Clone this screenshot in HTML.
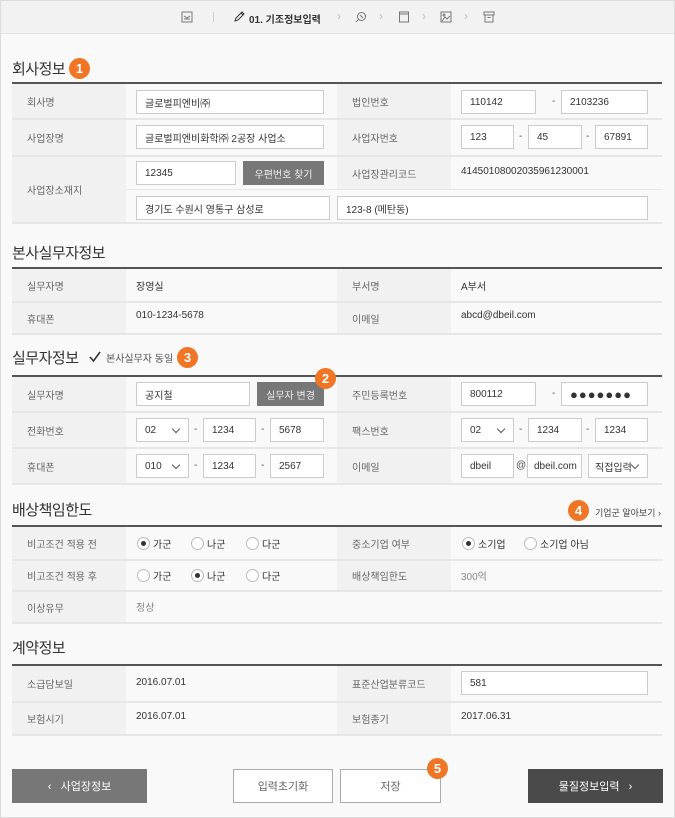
<!DOCTYPE html>
<html><head><meta charset="utf-8"><style>
*{box-sizing:border-box;margin:0;padding:0}
body{width:675px;height:818px;background:#f9f9f9;font-family:"Liberation Sans","Noto Sans CJK KR",sans-serif;font-size:10px;color:#333;position:relative;overflow:hidden}
.frame{position:absolute;left:0;top:0;width:675px;height:818px;border:1px solid #dcdcdc}
.hdr{position:absolute;left:1px;top:1px;width:673px;height:33px;background:#f2f2f2;border-bottom:1px solid #e2e2e2}
.a{position:absolute}
.t{position:absolute;left:12px;font-size:15px;color:#333;letter-spacing:-0.5px}
.ln{position:absolute;left:12px;width:650px;height:2px;background:#555}
.sep{position:absolute;left:12px;width:650px;height:2px;background:#e6e6e6}
.lb{position:absolute;background:#f1f1f1;color:#666;display:flex;align-items:center;padding-left:15px;font-size:10px}
.in{position:absolute;height:24px;border:1px solid #ccc;background:#fff;padding-left:8px;display:flex;align-items:center;font-size:10px;color:#333}
.tx{position:absolute;font-size:10px;color:#333}
.btn{position:absolute;height:24px;background:#777;color:#eee;display:flex;align-items:center;justify-content:center;font-size:10px}
.dash{position:absolute;font-size:10px;color:#555}
.badge{position:absolute;width:21px;height:21px;border-radius:50%;background:#f07524;color:#fff;font-weight:bold;font-size:13px;display:flex;align-items:center;justify-content:center}
.sel::after{content:"";position:absolute;right:9px;top:7px;width:5px;height:5px;border-right:1px solid #555;border-bottom:1px solid #555;transform:rotate(45deg)}
.rd{position:absolute;width:13px;height:13px;border:1px solid #bbb;border-radius:50%;background:#fff}
.rd.on::after{content:"";position:absolute;left:3px;top:3px;width:5px;height:5px;border-radius:50%;background:#333}
.rl{position:absolute;font-size:10px;color:#333}
.bt{position:absolute;top:769px;height:34px;display:flex;align-items:center;justify-content:center;font-size:11px}
</style></head><body>
<div class="frame"></div>
<div class="hdr">
<svg class="a" style="left:180px;top:10px" width="12" height="12" viewBox="0 0 12 12" fill="none" stroke="#777"><rect x="1" y="1" width="10" height="10"/><path d="M3 5l3 2 3-2M3 8h6"/></svg>
<div class="a" style="left:212px;top:11px;width:1px;height:10px;background:#ccc"></div>
<svg class="a" style="left:232px;top:10px" width="12" height="12" viewBox="0 0 12 12" fill="none" stroke="#333"><path d="M2 10l1-3 6-6 2 2-6 6zM8 2l2 2"/></svg>
<div class="a" style="left:248px;top:10px;font-size:10px;font-weight:bold;color:#333">01. 기조정보입력</div>
<div class="a" style="left:336px;top:8px;color:#bbb;font-size:12px">›</div>
<svg class="a" style="left:354px;top:10px" width="12" height="12" viewBox="0 0 12 12" fill="none" stroke="#777"><circle cx="6.5" cy="5.5" r="4"/><path d="M1 11l3-3M5 4l3 3"/></svg>
<div class="a" style="left:378px;top:8px;color:#bbb;font-size:12px">›</div>
<svg class="a" style="left:397px;top:10px" width="12" height="12" viewBox="0 0 12 12" fill="none" stroke="#777"><rect x="1.5" y="1" width="9" height="10"/><path d="M1.5 3h9"/></svg>
<div class="a" style="left:421px;top:8px;color:#bbb;font-size:12px">›</div>
<svg class="a" style="left:439px;top:10px" width="12" height="12" viewBox="0 0 12 12" fill="none" stroke="#777"><rect x="1" y="1" width="10" height="10"/><path d="M2 10l3-4 2 2 3-3"/><circle cx="4" cy="4" r="1"/></svg>
<div class="a" style="left:463px;top:8px;color:#bbb;font-size:12px">›</div>
<svg class="a" style="left:482px;top:10px" width="12" height="12" viewBox="0 0 12 12" fill="none" stroke="#777"><rect x="1" y="1" width="10" height="3"/><path d="M2 4v7h8V4M4.5 6.5h3"/></svg>
</div>

<div class="t" style="top:58px">회사정보</div>
<div class="badge" style="left:69px;top:58px">1</div>
<div class="ln" style="top:82px"></div>
<div class="lb" style="left:12px;top:84px;width:114px;height:34px">회사명</div>
<div class="lb" style="left:337px;top:84px;width:114px;height:34px">법인번호</div>
<div class="in" style="left:136px;top:90px;width:188px">글로벌피엔비㈜</div>
<div class="in" style="left:461px;top:90px;width:75px">110142</div>
<div class="dash" style="left:552px;top:96px">-</div>
<div class="in" style="left:561px;top:90px;width:87px">2103236</div>
<div class="sep" style="top:118px"></div>
<div class="lb" style="left:12px;top:120px;width:114px;height:35px">사업장명</div>
<div class="lb" style="left:337px;top:120px;width:114px;height:35px">사업자번호</div>
<div class="in" style="left:136px;top:125px;width:188px">글로벌피엔비화학㈜ 2공장 사업소</div>
<div class="in" style="left:461px;top:125px;width:53px">123</div>
<div class="dash" style="left:519px;top:131px">-</div>
<div class="in" style="left:528px;top:125px;width:54px">45</div>
<div class="dash" style="left:586px;top:131px">-</div>
<div class="in" style="left:595px;top:125px;width:53px">67891</div>
<div class="sep" style="top:155px"></div>
<div class="lb" style="left:12px;top:157px;width:114px;height:65px">사업장소재지</div>
<div class="in" style="left:136px;top:161px;width:100px">12345</div>
<div class="btn" style="left:243px;top:161px;width:81px">우편번호 찾기</div>
<div class="lb" style="left:337px;top:157px;width:114px;height:32px">사업장관리코드</div>
<div class="tx" style="left:461px;top:166px">41450108002035961230001</div>
<div class="a" style="left:126px;top:189px;width:536px;height:1px;background:#e6e6e6"></div>
<div class="in" style="left:136px;top:196px;width:194px">경기도 수원시 영통구 삼성로</div>
<div class="in" style="left:337px;top:196px;width:311px">123-8 (메탄동)</div>
<div class="sep" style="top:222px"></div>

<div class="t" style="top:242px">본사실무자정보</div>
<div class="ln" style="top:267px"></div>
<div class="lb" style="left:12px;top:269px;width:114px;height:32px">실무자명</div>
<div class="lb" style="left:337px;top:269px;width:114px;height:32px">부서명</div>
<div class="tx" style="left:136px;top:278px">장영실</div>
<div class="tx" style="left:461px;top:278px">A부서</div>
<div class="sep" style="top:301px"></div>
<div class="lb" style="left:12px;top:303px;width:114px;height:30px">휴대폰</div>
<div class="lb" style="left:337px;top:303px;width:114px;height:30px">이메일</div>
<div class="tx" style="left:136px;top:310px">010-1234-5678</div>
<div class="tx" style="left:461px;top:310px">abcd@dbeil.com</div>
<div class="sep" style="top:333px"></div>

<div class="t" style="top:347px">실무자정보</div>
<svg class="a" style="left:88px;top:350px" width="14" height="14" viewBox="0 0 14 14" fill="none" stroke="#333" stroke-width="1.6"><path d="M2 7l3.5 4L12 2"/></svg>
<div class="a" style="left:106px;top:350px;font-size:10px;color:#555">본사실무자 동일</div>
<div class="badge" style="left:177px;top:347px">3</div>
<div class="ln" style="top:375px"></div>
<div class="lb" style="left:12px;top:377px;width:114px;height:34px">실무자명</div>
<div class="lb" style="left:337px;top:377px;width:114px;height:34px">주민등록번호</div>
<div class="in" style="left:136px;top:382px;width:114px">공지철</div>
<div class="btn" style="left:257px;top:382px;width:67px">실무자 변경</div>
<div class="badge" style="left:315px;top:368px">2</div>
<div class="in" style="left:461px;top:382px;width:75px">800112</div>
<div class="dash" style="left:552px;top:388px">-</div>
<div class="in" style="left:561px;top:382px;width:87px;font-size:13px;letter-spacing:1px">●●●●●●●</div>
<div class="sep" style="top:411px"></div>
<div class="lb" style="left:12px;top:413px;width:114px;height:34px">전화번호</div>
<div class="lb" style="left:337px;top:413px;width:114px;height:34px">팩스번호</div>
<div class="in sel" style="left:136px;top:418px;width:53px">02</div>
<div class="dash" style="left:194px;top:424px">-</div>
<div class="in" style="left:203px;top:418px;width:53px">1234</div>
<div class="dash" style="left:261px;top:424px">-</div>
<div class="in" style="left:270px;top:418px;width:54px">5678</div>
<div class="in sel" style="left:461px;top:418px;width:53px">02</div>
<div class="dash" style="left:519px;top:424px">-</div>
<div class="in" style="left:528px;top:418px;width:54px">1234</div>
<div class="dash" style="left:586px;top:424px">-</div>
<div class="in" style="left:595px;top:418px;width:53px">1234</div>
<div class="sep" style="top:447px"></div>
<div class="lb" style="left:12px;top:449px;width:114px;height:34px">휴대폰</div>
<div class="lb" style="left:337px;top:449px;width:114px;height:34px">이메일</div>
<div class="in sel" style="left:136px;top:454px;width:53px">010</div>
<div class="dash" style="left:194px;top:460px">-</div>
<div class="in" style="left:203px;top:454px;width:53px">1234</div>
<div class="dash" style="left:261px;top:460px">-</div>
<div class="in" style="left:270px;top:454px;width:54px">2567</div>
<div class="in" style="left:461px;top:454px;width:53px">dbeil</div>
<div class="dash" style="left:516px;top:460px">@</div>
<div class="in" style="left:527px;top:454px;width:55px;padding-left:6px">dbeil.com</div>
<div class="in sel" style="left:588px;top:454px;width:60px;padding-left:6px">직접입력</div>
<div class="sep" style="top:483px"></div>

<div class="t" style="top:499px">배상책임한도</div>
<div class="badge" style="left:568px;top:500px">4</div>
<div class="a" style="left:595px;top:506px;font-size:9px;color:#444">기업군 알아보기 ›</div>
<div class="ln" style="top:525px"></div>
<div class="lb" style="left:12px;top:527px;width:114px;height:32px">비고조건 적용 전</div>
<div class="lb" style="left:337px;top:527px;width:114px;height:32px">중소기업 여부</div>
<div class="rd on" style="left:137px;top:537px"></div><div class="rl" style="left:153px;top:536px">가군</div>
<div class="rd" style="left:191px;top:537px"></div><div class="rl" style="left:207px;top:536px">나군</div>
<div class="rd" style="left:246px;top:537px"></div><div class="rl" style="left:262px;top:536px">다군</div>
<div class="rd on" style="left:462px;top:537px"></div><div class="rl" style="left:478px;top:536px">소기업</div>
<div class="rd" style="left:524px;top:537px"></div><div class="rl" style="left:540px;top:536px">소기업 아님</div>
<div class="sep" style="top:559px"></div>
<div class="lb" style="left:12px;top:561px;width:114px;height:29px">비고조건 적용 후</div>
<div class="lb" style="left:337px;top:561px;width:114px;height:29px">배상책임한도</div>
<div class="rd" style="left:137px;top:569px"></div><div class="rl" style="left:153px;top:568px">가군</div>
<div class="rd on" style="left:191px;top:569px"></div><div class="rl" style="left:207px;top:568px">나군</div>
<div class="rd" style="left:246px;top:569px"></div><div class="rl" style="left:262px;top:568px">다군</div>
<div class="tx" style="left:461px;top:568px;color:#888">300억</div>
<div class="sep" style="top:590px"></div>
<div class="lb" style="left:12px;top:592px;width:114px;height:30px">이상유무</div>
<div class="tx" style="left:136px;top:599px;color:#888">정상</div>
<div class="sep" style="top:622px"></div>

<div class="t" style="top:637px">계약정보</div>
<div class="ln" style="top:664px"></div>
<div class="lb" style="left:12px;top:666px;width:114px;height:35px">소급담보일</div>
<div class="lb" style="left:337px;top:666px;width:114px;height:35px">표준산업분류코드</div>
<div class="tx" style="left:136px;top:677px">2016.07.01</div>
<div class="in" style="left:461px;top:671px;width:187px">581</div>
<div class="sep" style="top:701px"></div>
<div class="lb" style="left:12px;top:703px;width:114px;height:31px">보험시기</div>
<div class="lb" style="left:337px;top:703px;width:114px;height:31px">보험종기</div>
<div class="tx" style="left:136px;top:711px">2016.07.01</div>
<div class="tx" style="left:461px;top:711px">2017.06.31</div>
<div class="sep" style="top:734px"></div>

<div class="bt" style="left:12px;width:135px;background:#777;color:#fff">‹&nbsp;&nbsp;&nbsp;사업장정보</div>
<div class="bt" style="left:233px;width:100px;border:1px solid #aaa;background:#fff;color:#666">입력초기화</div>
<div class="bt" style="left:340px;width:101px;border:1px solid #aaa;background:#fff;color:#666">저장</div>
<div class="badge" style="left:427px;top:758px">5</div>
<div class="bt" style="left:528px;width:135px;background:#4a4a4a;color:#fff">물질정보입력&nbsp;&nbsp;&nbsp;›</div>
</body></html>
